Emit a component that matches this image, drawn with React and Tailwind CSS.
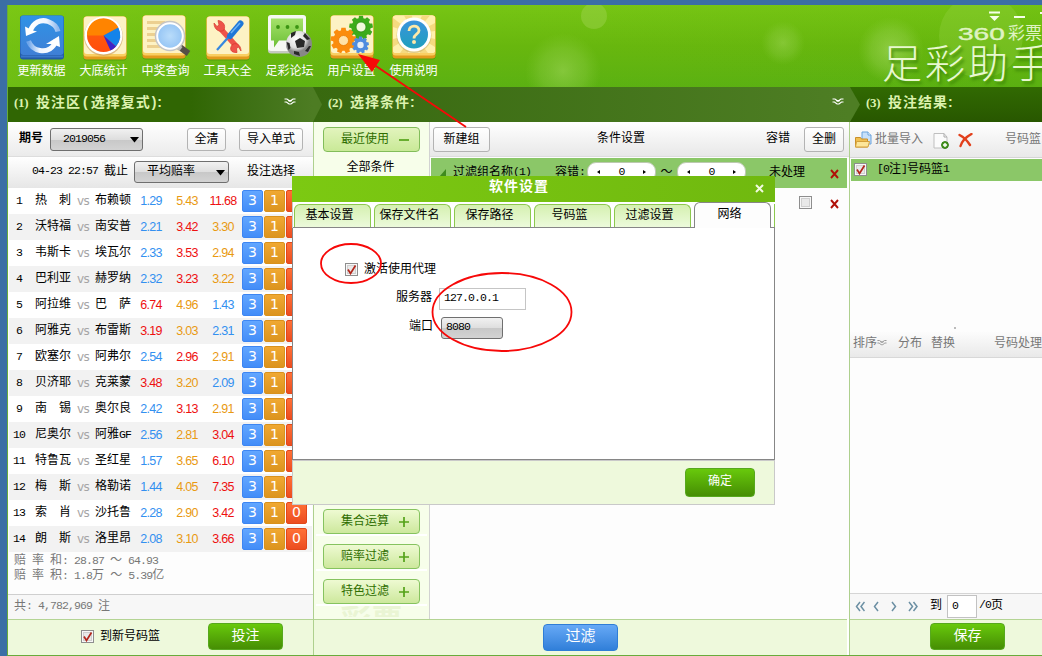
import React from 'react';

const cjk = "font-['Liberation_Sans','Noto_Sans_CJK_SC',sans-serif]";

const M = ({ children, className = '' }) => (
  <span className={`font-['Liberation_Mono',monospace] text-[11.5px] tracking-[-0.9px] whitespace-pre ${className}`}>{children}</span>
);

const IconBase = ({ children }) => (
  <svg width="44" height="46" viewBox="0 0 44 46" className="block overflow-visible">
    {children}
  </svg>
);

const Card = () => (
  <>
    <rect x="0.5" y="1.5" width="43" height="43" rx="3" fill="#3e8a08" opacity=".5" />
    <rect x="0.5" y="0.5" width="43" height="43" rx="3" fill="#e39a1e" />
    <rect x="0.5" y="0.5" width="43" height="40" rx="3" fill="#f9cf62" />
    <rect x="1" y="0.5" width="42" height="37.5" rx="3" fill="#fdf2c4" />
  </>
);

const gear = (cx, cy, r, n) => {
  const pts = [];
  for (let i = 0; i < n; i++) {
    const a = (i / n) * Math.PI * 2 - Math.PI / 2;
    const s = (Math.PI * 2) / n;
    [[-0.36, 0.8], [-0.24, 1], [0.24, 1], [0.36, 0.8]].forEach(([d, k]) => {
      pts.push(`${(cx + Math.cos(a + d * s) * r * k).toFixed(2)},${(cy + Math.sin(a + d * s) * r * k).toFixed(2)}`);
    });
  }
  return pts.join(' ');
};

const icons = {
  update: (
    <IconBase>
      <defs>
        <linearGradient id="ub" x1="0" y1="0" x2="0" y2="1"><stop offset="0" stopColor="#2f93e6" /><stop offset="1" stopColor="#3f7fd6" /></linearGradient>
        <linearGradient id="ua" x1="0" y1="0" x2="1" y2="0"><stop offset="0" stopColor="#fff" /><stop offset=".6" stopColor="#eef5ff" /><stop offset="1" stopColor="#8fb9ee" /></linearGradient>
        <linearGradient id="uc" x1="1" y1="0" x2="0" y2="0"><stop offset="0" stopColor="#fff" /><stop offset=".6" stopColor="#eef5ff" /><stop offset="1" stopColor="#6fa6ea" /></linearGradient>
      </defs>
      <rect x="0" y="0.5" width="44" height="44" rx="3" fill="#235ba6" />
      <rect x="0.5" y="0.5" width="43" height="39.5" rx="3" fill="url(#ub)" />
      <rect x="1" y="40.5" width="42" height="2" fill="#3a78cb" />
      <path d="M10 17C13 7 21 4 28 6.500c6 2 9 6 10 10" fill="none" stroke="url(#ua)" strokeWidth="5" />
      <path d="M5 11.500l1 9.500 11-4.500-4-1z" fill="#fff" />
      <path d="M36 25c-2 8-9 12-16 10.500-6-1-9.500-4-11.500-9.500" fill="none" stroke="url(#uc)" strokeWidth="5" />
      <path d="M40 32l-1-11-13 8 6 0z" fill="#fff" />
    </IconBase>
  ),
  stats: (
    <IconBase>
      <g transform="translate(1 1)">
        <Card />
        <circle cx="20.500" cy="20.500" r="19.500" fill="#c9975a" opacity=".6" />
        <circle cx="20.500" cy="19.500" r="19" fill="#fff" />
        <defs><linearGradient id="pg" x1="0" y1="0" x2="0" y2="1"><stop offset="0" stopColor="#ff9a00" /><stop offset=".38" stopColor="#ff7c00" /><stop offset=".42" stopColor="#ff5a0c" /><stop offset="1" stopColor="#ff4d0d" /></linearGradient></defs>
        <circle cx="20.500" cy="19.500" r="16.500" fill="url(#pg)" />
        <path d="M4 19.500A16.500 16.500 0 0 1 35.300 11.500L20.500 19.500z" fill="#ff8400" />
        <path d="M20.500 19.500L35.300 11.500A16.500 16.500 0 0 1 33 30.500z" fill="#1483ea" />
        <path d="M20.500 19.500L33 30.500A16.500 16.500 0 0 1 27.500 34.500z" fill="#3c22c9" />
      </g>
    </IconBase>
  ),
  search: (
    <IconBase>
      <g transform="translate(-2 0)">
        <Card />
        <g fill="#ecd090"><rect x="5" y="6" width="18" height="3" /><rect x="5" y="12" width="11" height="3" /><rect x="5" y="18" width="8" height="3" /><rect x="5" y="24" width="9" height="3" /><rect x="5" y="30" width="14" height="3" /></g>
        <path d="M37 31.500l9.500 7" stroke="#554f46" strokeWidth="6" />
        <path d="M35 31l4 3" stroke="#b9b9b9" strokeWidth="5" />
        <defs><radialGradient id="lens"><stop offset="0" stopColor="#b9dcfa" /><stop offset="1" stopColor="#92c3f4" /></radialGradient></defs>
        <circle cx="28" cy="21" r="14" fill="url(#lens)" stroke="#c5c5c5" strokeWidth="2.500" />
        <circle cx="28" cy="21" r="12.800" fill="none" stroke="#fff" strokeWidth="2" />
      </g>
    </IconBase>
  ),
  tools: (
    <IconBase>
      <g transform="translate(0 1)">
        <Card />
        <path d="M13 11l18 20" stroke="#ee5449" strokeWidth="5.500" />
        <path d="M8 7c0 7 6 10 10 7 2-5-1-9-6-9.500l1 4.500-2 1.500z" fill="#ee5449" stroke="#d7362b" strokeWidth=".7" />
        <path d="M35 35c0-7-6-9-9-6-3 4-1 8 5 7.500l-.5-4 2-1.500z" fill="#ee5449" stroke="#d7362b" strokeWidth=".7" />
        <path d="M11 34L27 16" stroke="#3587df" strokeWidth="2.200" />
        <path d="M24 20L34.500 7.500" stroke="#1f77d8" strokeWidth="6" strokeLinecap="round" />
        <path d="M25 17L34 7" stroke="#6fb4f3" strokeWidth="1.500" />
      </g>
    </IconBase>
  ),
  forum: (
    <IconBase>
      <rect x="0" y="0.500" width="38" height="38" rx="3" fill="#c5c9c0" />
      <rect x="0" y="0" width="38" height="36" rx="3" fill="#f6f8f3" />
      <defs><linearGradient id="fg" x1="0" y1="0" x2="0" y2="1"><stop offset="0" stopColor="#a5e26a" /><stop offset="1" stopColor="#6cbf36" /></linearGradient></defs>
      <path d="M3 3.500h32v22H11l-5 7v-7H3z" fill="url(#fg)" />
      <g fill="#3c9413"><circle cx="10" cy="12" r="1.900" /><circle cx="19.500" cy="12" r="1.900" /><circle cx="29" cy="12" r="1.900" /></g>
      <defs><radialGradient id="ball" cx=".4" cy=".3"><stop offset="0" stopColor="#fff" /><stop offset=".7" stopColor="#dedede" /><stop offset="1" stopColor="#888" /></radialGradient></defs>
      <circle cx="31" cy="29" r="13" fill="url(#ball)" />
      <path d="M27 26l5-3 5 3-1 6-7 1zM23 18l5-2-1 4-4 3zM37 18l5 6-3 1-4-4zM41 31l2 0-3 6-3-1zM26 36l5 1 1 4-6-2zM18.500 27l3 1 1 5-2 2z" fill="#282828" />
    </IconBase>
  ),
  settings: (
    <IconBase>
      <Card />
      <polygon points={gear(31, 12.500, 12, 9)} fill="#3cab1b" />
      <circle cx="31" cy="12" r="5" fill="#f1f9dc" stroke="#2b8d10" strokeWidth=".8" />
      <polygon points={gear(13.500, 25.500, 13, 9)} fill="#fb8c0d" />
      <circle cx="13.500" cy="25.500" r="5" fill="#ffe2a8" stroke="#e97b00" strokeWidth=".8" />
      <polygon points={gear(30.500, 30, 8.500, 9)} fill="#4f8cdf" />
      <circle cx="30.500" cy="30" r="3.200" fill="#e6eef7" />
    </IconBase>
  ),
  help: (
    <IconBase>
      <Card />
      <rect x="1" y="0.500" width="42" height="37.500" rx="3" fill="#fff0ad" />
      <path d="M22 19L1 3v9zM22 19L12 0.500h8zM22 19L30 0.500h8zM22 19L43 8v8zM22 19L43 24v8zM22 19L36 38h-8zM22 19L16 38H8zM22 19L1 32v-8z" fill="#f5da80" />
      <circle cx="22" cy="20.500" r="17.500" fill="#c9b06a" opacity=".6" />
      <circle cx="22" cy="19.500" r="17" fill="#fff" />
      <defs><linearGradient id="hg" x1="0" y1="0" x2="0" y2="1"><stop offset="0" stopColor="#3a94dc" /><stop offset="1" stopColor="#1f9fbd" /></linearGradient></defs>
      <circle cx="22" cy="19.500" r="14" fill="url(#hg)" />
      <path d="M17 16c0-6.500 10-6.500 10-.5 0 4-5 3.500-5 8" fill="none" stroke="#fde9a8" strokeWidth="2.800" />
      <circle cx="22" cy="27" r="2" fill="#fde9a8" />
    </IconBase>
  ),
};

const tools = [
  ['更新数据', 'update'], ['大底统计', 'stats'], ['中奖查询', 'search'], ['工具大全', 'tools'],
  ['足彩论坛', 'forum'], ['用户设置', 'settings'], ['使用说明', 'help'],
];

const Header = () => (
  <header className="relative flex h-[82px] overflow-hidden bg-gradient-to-b from-[#77c514] via-[#68b70e] to-[#5bb112]">
    <svg className="absolute inset-0" width="1035" height="82">
      <defs>
        <radialGradient id="g1"><stop offset="0" stopColor="#b2e070" stopOpacity=".55" /><stop offset=".6" stopColor="#9bd455" stopOpacity=".35" /><stop offset="1" stopColor="#8fd040" stopOpacity="0" /></radialGradient>
        <linearGradient id="g2" x1="0" x2="1"><stop offset="0" stopColor="#7fca16" stopOpacity=".5" /><stop offset=".4" stopColor="#6cba10" stopOpacity="0" /><stop offset="1" stopColor="#51a808" stopOpacity=".1" /></linearGradient>
      </defs>
      <rect width="1035" height="82" fill="url(#g2)" />
      <circle cx="586" cy="11" r="13" fill="#a4d857" opacity=".4" />
      <circle cx="555" cy="66" r="38" fill="url(#g1)" opacity=".8" />
      <circle cx="775" cy="38" r="22" fill="url(#g1)" opacity=".7" />
      <circle cx="883" cy="45" r="33" fill="url(#g1)" />
      <circle cx="973" cy="31" r="42" fill="#97d549" opacity=".3" />
    </svg>
    <nav className="relative flex pl-[3px] pt-[10px]">
      {tools.map(([label, key]) => (
        <div key={key} className="flex w-[62px] flex-col items-center">
          {icons[key]}
          <span className="mt-[2px] -ml-px text-[12px] leading-[16px] whitespace-nowrap text-white">{label}</span>
        </div>
      ))}
    </nav>
    <div className="relative ml-auto flex w-[160px] flex-col">
      <div className="flex h-[21px] justify-end pt-[6px]">
        <svg width="54" height="12" viewBox="0 0 54 12"><path d="M1 .500h11v2H1zM1.500 5h10l-5 5zM26 5h11v2H26zM52 1h2v2h-2z" fill="#f5ffe8" /></svg>
      </div>
      <div className="flex h-[17px] items-center pl-[76px] leading-[17px] whitespace-nowrap text-[#dff3c2]">
        <span className="w-[49px]"><span className="inline-block origin-left scale-x-[1.65] pt-[2px] font-['Liberation_Sans'] text-[17px] [-webkit-text-stroke:0.4px_#dff3c2]">360</span></span>
        <span className="ml-[1px] pb-[2px] text-[17px]">彩票</span>
      </div>
      <div className="-mt-[1px] h-[40px] font-['Noto_Sans_CJK_SC',sans-serif] font-light text-[40px] leading-[38px] tracking-[3px] whitespace-nowrap text-[#e8f8cf] [text-shadow:2px_3px_3px_#3f8a08]">足彩助手</div>
    </div>
  </header>
);

const Chev = ({ color = '#fff' }) => (
  <svg width="12" height="8" viewBox="0 0 12 8"><path d="M.500 1h2.500l2 1.500h2L9 1h2.500M.500 4h2l2.500 2h2l2.500-2h2M4 2.500l2 .800 2-.800" fill="none" stroke={color} strokeWidth="1.200" /></svg>
);

const StepTitle = ({ n, children }) => (
  <>
    <span className="w-[22px] font-['Liberation_Serif',serif] text-[13px] font-bold tracking-[-0.3px]">({n})</span>
    <span className="text-[14px] font-bold tracking-[1px]">{children}</span>
  </>
);

const Tip = ({ fill, w }) => (
  <svg className="absolute top-0 -right-[10px] z-10" width="10" height="35" viewBox="0 0 10 35"><path d={`M0 0L${w} 17.500L0 35z`} fill={fill} /></svg>
);

const StepBar = () => (
  <div className="flex h-[35px] whitespace-nowrap text-[#dcf2ae] leading-[31px]">
    <div className="relative flex w-[305px] bg-gradient-to-r from-[#306603] from-60% to-[#4d7c23] pl-[6px]">
      <StepTitle n="1">投注区<span className="mx-[2px]">(</span>选择复式<span className="ml-[1px]">)</span>:</StepTitle>
      <span className="absolute left-[276px] top-[11px] leading-none"><Chev /></span>
      <Tip fill="#4d7c23" w={9} />
    </div>
    <div className="relative flex w-[537px] bg-gradient-to-r from-[#38690f] to-[#4e7e24] pl-[15px]">
      <StepTitle n="2">选择条件:</StepTitle>
      <span className="absolute left-[519px] top-[11px] leading-none"><Chev /></span>
      <Tip fill="#4e7e24" w={10} />
    </div>
    <div className="flex flex-1 bg-gradient-to-b from-[#316a02] to-[#285700] pl-[16px]">
      <StepTitle n="3">投注结果:</StepTitle>
    </div>
  </div>
);

const Check = ({ on = true }) => (
  <span className="flex h-[13px] w-[13px] shrink-0 items-center justify-center border border-[#8e8e8e] bg-[#e9e9e9] shadow-[inset_0_0_0_1px_#f8f8f8,inset_0_0_0_2px_#cfcfcf]">
    {on && <svg width="11" height="11" viewBox="0 0 11 11" className="shrink-0"><path d="M2 5.500l2.500 4L9.500 1.500" fill="none" stroke="#b3261b" strokeWidth="1.700" /></svg>}
  </span>
);

const GrayBtn = ({ children, className }) => (
  <button className={`flex shrink-0 items-center justify-center rounded-[3px] border border-[#b3b3b3] bg-gradient-to-b from-white to-[#f0f0f0] pb-[2px] text-[12px] leading-[20px] whitespace-nowrap ${className}`}>{children}</button>
);

const Select = ({ children, className, arrow = true }) => (
  <div className={`flex shrink-0 items-center rounded-[3px] border border-[#6f6f6f] bg-[linear-gradient(#f1f1f1_0%,#dedede_50%,#c8c8c8_52%,#d3d3d3_100%)] ${className}`}>
    {children}
    {arrow && <svg className="ml-auto mr-[3px] mt-[1px]" width="9" height="6"><path d="M0 0h9L4.500 5.500z" fill="#000" /></svg>}
  </div>
);

const GreenBtn = ({ children, className }) => (
  <button className={`flex shrink-0 justify-center rounded-[4px] border border-[#57a81e] bg-gradient-to-b from-[#68c90c] to-[#468e04] text-white ${className}`}>{children}</button>
);

const B = 'text-[#3390f0]', R = 'text-[#ee1010]', O = 'text-[#e99a12]';
const games = [
  ['热　刺', '布赖顿', '1.29', B, '5.43', O, '11.68', R],
  ['沃特福', '南安普', '2.21', B, '3.42', R, '3.30', O],
  ['韦斯卡', '埃瓦尔', '2.33', B, '3.53', R, '2.94', O],
  ['巴利亚', '赫罗纳', '2.32', B, '3.23', R, '3.22', O],
  ['阿拉维', '巴　萨', '6.74', R, '4.96', O, '1.43', B],
  ['阿雅克', '布雷斯', '3.19', R, '3.03', O, '2.31', B],
  ['欧塞尔', '阿弗尔', '2.54', B, '2.96', R, '2.91', O],
  ['贝济耶', '克莱蒙', '3.48', R, '3.20', O, '2.09', B],
  ['南　锡', '奥尔良', '2.42', B, '3.13', R, '2.91', O],
  ['尼奥尔', '阿雅GF', '2.56', B, '2.81', O, '3.04', R],
  ['特鲁瓦', '圣红星', '1.57', B, '3.65', O, '6.10', R],
  ['梅　斯', '格勒诺', '1.44', B, '4.05', O, '7.35', R],
  ['索　肖', '沙托鲁', '2.28', B, '2.90', O, '3.42', R],
  ['朗　斯', '洛里昂', '2.08', B, '3.10', O, '3.66', R],
];

const Odd = ({ v, c }) => (
  <span className={`w-[36px] text-center font-['Liberation_Sans',sans-serif] text-[12.5px] tracking-[-0.7px] leading-[26px] ${c}`}>{v}</span>
);

const pick = "flex h-[22px] w-[21px] items-center justify-center rounded-[2px] border font-['DejaVu_Sans',sans-serif] text-[14px] leading-none text-white pb-[2px]";

const BetPanel = () => (
  <section className="flex w-[306px] shrink-0 flex-col border-r border-[#aed08e] bg-[#fdfdfd]">
    <div className="flex h-[35px] items-start border-b border-[#ddd] bg-gradient-to-b from-white to-[#ebebeb] pl-[11px] pt-[5px]">
      <span className="w-[31px] pt-[1px] font-bold leading-[20px]">期号</span>
      <Select className="mt-[1px] h-[23px] w-[93px] pl-[12px]"><M className="pb-[2px]">2019056</M></Select>
      <GrayBtn className="ml-[44px] mt-[1px] h-[23px] w-[39px]">全清</GrayBtn>
      <GrayBtn className="ml-[13px] mt-[1px] h-[23px] w-[64px]">导入单式</GrayBtn>
    </div>
    <div className="flex h-[31px] items-start bg-gradient-to-b from-white to-[#e6e6e6] pl-[24px] pt-[4px]">
      <div className="flex w-[102px] items-center leading-[20px]"><M>04-23 22:57 </M>截止</div>
      <Select className="h-[22px] w-[95px] pl-[12px] leading-[18px]"><span className="pb-[2px]">平均赔率</span></Select>
      <span className="ml-[18px] leading-[20px]">投注选择</span>
    </div>
    <div className="mx-px">
      {games.map((g, i) => (
        <div key={i} className={`flex h-[26px] items-center leading-[26px] ${i % 2 ? 'bg-[#f2f2f2]' : 'bg-white'}`}>
          <M className="w-[20px] pb-[1px] text-center">{i + 1}</M>
          <span className="ml-[6px] w-[42px] pb-[2px] whitespace-nowrap">{g[0]}</span>
          <span className="w-[18px] font-['DejaVu_Sans',sans-serif] text-[12px] tracking-[-0.7px] text-[#a5a5a5]">vs</span>
          <span className="w-[38px] pb-[2px] whitespace-nowrap">{g[1].replace('GF', '')}{g[1].includes('GF') && <M>GF</M>}</span>
          <Odd v={g[2]} c={g[3]} /><Odd v={g[4]} c={g[5]} /><Odd v={g[6]} c={g[7]} />
          <div className="ml-[1px] flex gap-px">
            <span className={`${pick} border-[#3d86f3] bg-gradient-to-b from-[#62a6ff] to-[#438df8]`}>3</span>
            <span className={`${pick} border-[#da921c] bg-gradient-to-b from-[#f0a832] to-[#dc941e]`}>1</span>
            <span className={`${pick} border-[#e2471a] bg-gradient-to-b from-[#ff7036] to-[#ec4c20]`}>0</span>
          </div>
        </div>
      ))}
    </div>
    <div className="flex h-[43px] flex-col border-b border-[#cfcfcf] pl-[6px] pt-px text-[#777] leading-[15px]">
      <span className="flex items-center whitespace-pre">赔<M> </M>率<M> </M>和<M>: 28.87 </M>～<M> 64.93</M></span>
      <span className="flex items-center whitespace-pre">赔<M> </M>率<M> </M>积<M>: 1.8</M>万<M> </M>～<M> 5.39</M>亿</span>
    </div>
    <div className="flex h-[24px] items-center bg-[#f7f7f7] pb-[3px] pl-[6px] whitespace-pre text-[#777]">共<M>: 4,782,969 </M>注</div>
    <div className="flex flex-1 border-t border-[#b4d494] bg-[#eef9dc] pl-[73px]">
      <span className="mt-[10px]"><Check /></span>
      <span className="ml-[6px] mt-[7px] w-[108px] leading-[18px]">到新号码篮</span>
      <GreenBtn className="mt-[3px] h-[27px] w-[75px] text-[14px] leading-[22px]">投注</GreenBtn>
    </div>
  </section>
);

const Side = ({ children, plus = true, first }) => (
  <button className={`flex h-[25px] w-[97px] shrink-0 items-center rounded-[4px] border pl-[17px] text-[12px] leading-none text-[#2f6e00] ${first ? 'border-[#82bd5a] bg-gradient-to-b from-[#e2f4bd] to-[#c9e997]' : 'border-[#86c35f] bg-gradient-to-b from-[#eefad2] to-[#cde89c]'}`}>
    <span className="pb-[2px]">{children}</span>
    <svg className="ml-[10px] mt-[1px]" width="10" height="10"><path d={plus ? 'M0 5h10M5 0v10' : 'M0 5h10'} stroke="#54a219" strokeWidth="1.700" /></svg>
  </button>
);

const Stepper = () => (
  <div className="flex h-[20px] w-[69px] items-center justify-between rounded-[9px] border border-[#bcc9b0] bg-white px-[8px]">
    <svg width="4" height="6"><path d="M4 1v4L1 3z" /></svg><M>0</M><svg width="4" height="6"><path d="M0 1v4L3 3z" /></svg>
  </div>
);

const RedX = () => (
  <svg width="9" height="10" viewBox="0 0 9 10"><path d="M1 1l7 8M8 1L1 9" stroke="#b01008" strokeWidth="1.900" fill="none" /></svg>
);

const FilterPanel = () => (
  <section className="flex w-[535px] shrink-0 flex-col bg-white">
    <div className="flex h-[497px]">
      <aside className="flex w-[116px] flex-col items-center overflow-hidden border-r border-[#d2d2d2] bg-[#f7feea] pt-[5px]">
        <Side plus={false} first>最近使用</Side>
        <span className="mt-[5px] mr-[2px] leading-[20px]">全部条件</span>
        <div className="mt-[324px] flex w-[111px] flex-col items-center">
          <div className="flex h-[35px] w-full justify-center border-b-2 border-white pt-[8px]"><Side>集合运算</Side></div>
          <div className="flex h-[35px] w-full justify-center border-b-2 border-white pt-[8px]"><Side>赔率过滤</Side></div>
          <div className="flex h-[35px] w-full justify-center border-b-2 border-white pt-[8px]"><Side>特色过滤</Side></div>
          <span className="h-[11px] overflow-hidden text-[31px] font-bold leading-[30px] text-[#eaf5d4]">彩票</span>
        </div>
      </aside>
      <div className="flex flex-1 flex-col bg-[#fdfdfd]">
        <div className="flex h-[35px] items-start border-b border-[#ddd] bg-gradient-to-b from-white to-[#e8e8e8] pl-[3px] pt-[5px] leading-[22px]">
          <GrayBtn className="h-[25px] w-[57px]">新建组</GrayBtn>
          <span className="ml-[107px]">条件设置</span>
          <span className="ml-[121px]">容错</span>
          <GrayBtn className="ml-[14px] h-[25px] w-[40px]">全删</GrayBtn>
        </div>
        <div className="ml-px mr-[2px] mt-px flex h-[30px] items-start bg-[#8bc768] pt-[4px] leading-[20px]">
          <svg className="ml-[8px] mt-[7px]" width="7" height="8"><path d="M7 0v8H0z" fill="#3e8b1c" /></svg>
          <span className="ml-[7px] flex w-[102px] items-center whitespace-nowrap">过滤组名称<M>(1)</M></span>
          <span className="flex w-[32px] items-center whitespace-nowrap">容错<M>:</M></span>
          <Stepper />
          <span className="w-[21px] text-center">～</span>
          <Stepper />
          <span className="ml-[23px]">未处理</span>
          <span className="ml-[25px] mt-[7px] leading-none"><RedX /></span>
        </div>
        <div className="flex pl-[369px] pt-[8px]"><Check on={false} /><span className="ml-[18px] mt-[3px] leading-none"><RedX /></span></div>
      </div>
    </div>
    <div className="mr-[2px] flex flex-1 border-t border-[#b4d494] bg-[#eef9dc] pl-[229px] pt-[4px]">
      <button className="flex h-[27px] w-[75px] justify-center rounded-[4px] border border-[#2f7dd6] bg-gradient-to-b from-[#66a9f6] to-[#307fd9] text-[15px] leading-[22px] text-white">过滤</button>
    </div>
  </section>
);

const Pager = ({ d, w }) => (
  <svg width={w} height="11" viewBox={`0 0 ${w} 11`} className="shrink-0"><path d={d} fill="none" stroke="#6b8fa3" strokeWidth="1.500" /></svg>
);

const ResultPanel = () => (
  <section className="flex min-w-0 flex-1 flex-col border-l border-[#aed08e] bg-[#fdfdfd] whitespace-nowrap">
    <div className="flex h-[36px] items-start border-b border-[#d5d5d5] bg-gradient-to-b from-white to-[#e9e9e9] pl-[5px] pt-[6px] leading-[22px] text-[#777]">
      <svg className="mt-[3px]" width="17" height="18" viewBox="0 0 17 18">
        <path d="M7 1h6l3 3v9H7z" fill="#c7e0f9" stroke="#6aa3dc" /><path d="M13 1v3h3" fill="#fff" stroke="#6aa3dc" />
        <path d="M.500 16V6.500h5l1 1.500h6v8z" fill="#f0bf50" stroke="#c9902a" /><path d="M.500 16l1-5.500h13l-1.500 5.500z" fill="#fde69a" stroke="#d4a03a" />
      </svg>
      <span className="ml-[3px] w-[54px]">批量导入</span>
      <svg className="ml-[4px] mt-[5px]" width="17" height="18" viewBox="0 0 17 18">
        <path d="M1 .500h10l3 3.500v11H1z" fill="#fbfbfb" stroke="#bfbfbf" /><path d="M11 .500V4h3" fill="none" stroke="#aaa" /><circle cx="12" cy="12" r="3.400" fill="#4c9a24" stroke="#2f7a10" /><path d="M10 12h4M12 10v4" stroke="#fff" strokeWidth="1.400" />
      </svg>
      <svg className="ml-[8px] mt-[5px]" width="15" height="15" viewBox="0 0 15 15"><path d="M1.500 2c4 2 8 6 10.500 10" fill="none" stroke="#e2401c" strokeWidth="2.400" strokeLinecap="round" /><path d="M13.500 1C8 4 4 8 2.500 13" fill="none" stroke="#e2401c" strokeWidth="2.400" strokeLinecap="round" /></svg>
      <span className="ml-[32px]">号码篮</span>
    </div>
    <div className="ml-px mt-px flex h-[22px] items-start bg-[#8bc768] pl-[3px] pt-[4px]">
      <Check />
      <span className="-mt-[3px] ml-[10px] flex items-center leading-[18px]"><M>[0</M>注<M>]</M>号码篮<M>1</M></span>
    </div>
    <div className="flex h-[150px] items-end pl-[104px]"><i className="mb-[2px] h-[2px] w-[2px] bg-[#bbb]" /></div>
    <div className="flex h-[27px] items-center border-b border-[#d8d8d8] bg-gradient-to-b from-[#fdfdfd] to-[#e9e9e9] pl-[3px] pb-[2px] text-[#777]">
      排序<Chev color="#999" /><span className="ml-[11px]">分布</span><span className="ml-[9px]">替换</span><span className="ml-[39px]">号码处理</span>
    </div>
    <div className="h-[235px]" />
    <div className="flex h-[26px] items-center border-t border-[#d5d5d5] bg-[#f7f7f7] pl-[5px]">
      <Pager w={10} d="M5 1L1.500 5.500 5 10M9.500 1L6 5.500 9.500 10" />
      <span className="ml-[8px]"><Pager w={6} d="M5 1L1.500 5.500 5 10" /></span>
      <span className="ml-[12px]"><Pager w={6} d="M1 1l3.500 4.500L1 10" /></span>
      <span className="ml-[11px]"><Pager w={10} d="M1 1l3.500 4.500L1 10M5.500 1L9 5.500 5.500 10" /></span>
      <span className="ml-[12px] pb-[3px]">到</span>
      <span className="ml-[5px] flex h-[23px] w-[30px] shrink-0 items-center border border-[#c2c2c2] bg-white pb-[2px] pl-[4px]"><M>0</M></span>
      <span className="ml-[2px] flex items-center pb-[3px]"><M>/0</M>页</span>
    </div>
    <div className="flex flex-1 border-t border-[#b4d494] bg-[#eef9dc] pl-[80px] pt-[3px]">
      <GreenBtn className="h-[27px] w-[75px] text-[14px] leading-[22px]">保存</GreenBtn>
    </div>
  </section>
);

const tabs = ['基本设置', '保存文件名', '保存路径', '号码篮', '过滤设置'];

const Dialog = () => (
  <div className="absolute left-[292px] top-[176px] z-20 flex h-[329px] w-[483px] flex-col bg-white">
    <div className="relative flex h-[26px] shrink-0 justify-center bg-gradient-to-r from-[#7cc912] to-[#70b90f] pr-[29px] text-[14px] font-bold tracking-[1px] leading-[21px] text-white">
      软件设置
      <svg className="absolute right-[11px] top-[8px]" width="9" height="9"><path d="M1 1l7 7M8 1L1 8" stroke="#f1fbdf" strokeWidth="2" /></svg>
    </div>
    <div className="relative flex h-[26px] shrink-0 items-end gap-[3px] overflow-hidden border-l border-[#c9c9c9] pl-px">
      <span className="absolute bottom-0 left-0 h-px w-full bg-[#868686]" />
      {tabs.map((t) => (
        <span key={t} className="mb-px h-[23px] w-[77px] shrink-0 rounded-t-[6px] border border-b-0 border-[#8cc84e] bg-gradient-to-b from-[#d5f0b0] to-[#ecfadb] pr-[6px] text-center leading-[21px] whitespace-nowrap">{t}</span>
      ))}
      <span className="relative h-[26px] w-[77px] shrink-0 rounded-t-[6px] border border-b-0 border-[#868686] bg-[#fdfdfd] pr-[6px] text-center leading-[23px]">网络</span>
      <span className="mb-px h-[23px] w-[4px] shrink-0 bg-[#8cc84e]" />
    </div>
    <div className="flex h-[232px] flex-col border border-t-0 border-[#868686] bg-white">
      <div className="flex pl-[52px] pt-[35px]"><Check /><span className="-mt-[3px] ml-[6px] h-[16px] leading-[18px]">激活使用代理</span></div>
      <div className="mt-[12px] flex h-[22px]">
        <span className="w-[139px] text-right leading-[18px]">服务器</span>
        <span className="ml-[7px] flex h-[22px] w-[87px] items-center border border-[#c5c5c5] bg-white pb-[2px] pl-[4px]"><M>127.0.0.1</M></span>
      </div>
      <div className="mt-[7px] flex h-[22px]">
        <span className="w-[140px] text-right leading-[18px]">端口</span>
        <Select arrow={false} className="ml-[8px] h-[22px] w-[62px] pb-[2px] pl-[4px]"><M>8080</M></Select>
      </div>
    </div>
    <div className="flex h-[45px] justify-end border border-[#c9c9c9] bg-[#eef9dc] pr-[19px] pt-[7px]">
      <GreenBtn className="h-[29px] w-[70px] text-[12px] leading-[25px]">确定</GreenBtn>
    </div>
  </div>
);

export default function App() {
  return (
    <div className={`relative flex h-[656px] w-[1042px] flex-col overflow-hidden bg-[#3b6ea5] pl-[7px] pt-[5px] text-[12px] text-black ${cjk}`}>
      <div className="flex flex-1 flex-col border-b border-l border-[#68ab3c]">
        <Header />
        <StepBar />
        <main className="flex min-h-0 flex-1">
          <BetPanel />
          <FilterPanel />
          <ResultPanel />
        </main>
      </div>
      <Dialog />
      <svg className="pointer-events-none absolute inset-0 z-30" width="1042" height="656">
        <g fill="none" stroke="#f70808" strokeWidth="1.800">
          <ellipse cx="351" cy="263.500" rx="30" ry="19.500" />
          <ellipse cx="502" cy="312" rx="69.500" ry="39" />
          <path d="M466 127L370 62" />
        </g>
        <path d="M358 54l22 6-8 12z" fill="#f70808" />
      </svg>
    </div>
  );
}
